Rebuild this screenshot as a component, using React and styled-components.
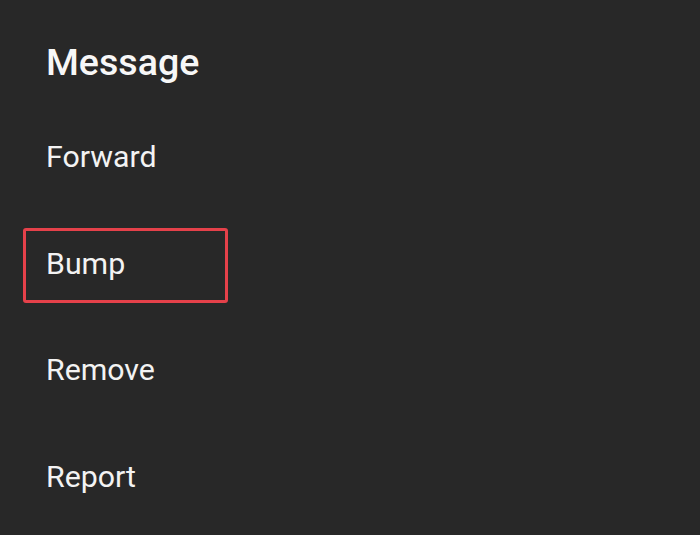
import React from "react";
import styled, { createGlobalStyle } from "styled-components";

const Global = createGlobalStyle`
  html, body { margin: 0; padding: 0; background: #282828; }
  body { font-family: Roboto, "Noto Sans", sans-serif; }
`;

const Sheet = styled.div`
  width: 700px;
  height: 535px;
  box-sizing: border-box;
  background: #282828;
  padding: 40px 0 0 23px;
  display: flex;
  flex-direction: column;
  overflow: hidden;
`;

const Title = styled.h2`
  margin: 0 0 37px 23px;
  font-size: 37.6px;
  line-height: 44px;
  font-weight: 500;
  color: #f7f7f7;
`;

const List = styled.div`
  display: flex;
  flex-direction: column;
  gap: 31.5px;
`;

const Item = styled.div`
  width: 205px;
  height: 75px;
  box-sizing: border-box;
  border: 3px solid ${(p) => (p.$highlight ? "#e5414a" : "transparent")};
  border-radius: 3px;
  padding: 0 0 3px 20px;
  display: flex;
  align-items: center;
  font-size: 30.3px;
  line-height: 1.171;
  color: #f3f3f3;
`;

const items = [
  { label: "Forward" },
  { label: "Bump", highlight: true },
  { label: "Remove" },
  { label: "Report" },
];

export default function App() {
  return (
    <>
      <Global />
      <Sheet>
        <Title>Message</Title>
        <List>
          {items.map((it) => (
            <Item key={it.label} $highlight={it.highlight}>
              {it.label}
            </Item>
          ))}
        </List>
      </Sheet>
    </>
  );
}
